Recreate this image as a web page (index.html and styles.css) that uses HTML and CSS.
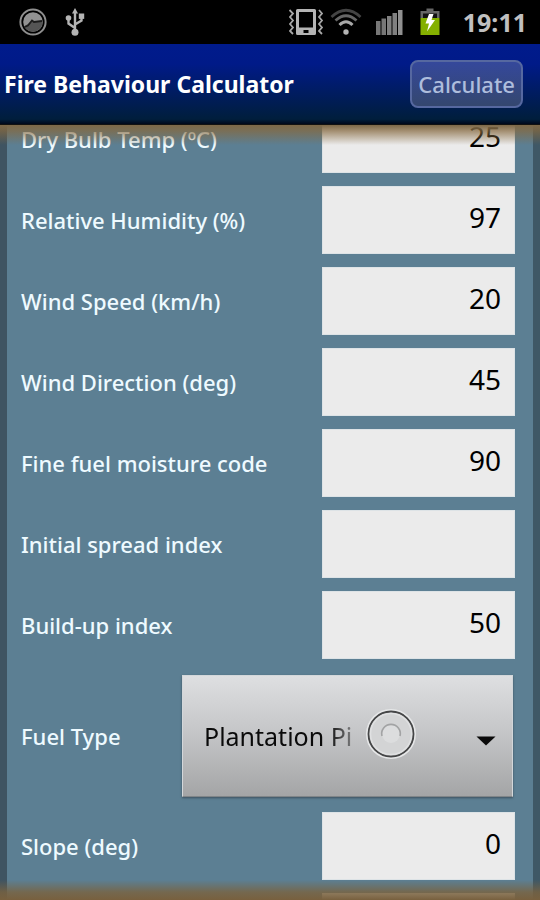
FILE: index.html
```html
<!DOCTYPE html>
<html lang="en">
<head>
<meta charset="UTF-8">
<meta name="viewport" content="width=device-width, initial-scale=1.0">
<title>Fire Behaviour Calculator</title>
<link rel="stylesheet" href="styles.css">
</head>
<body>
<div class="status-bar">
<div class="status-left">
<svg class="icon" width="28" height="28" viewBox="0 0 28 28">
<circle cx="14" cy="14" r="12.6" fill="none" stroke="#8f8f8f" stroke-width="2"/>
<circle cx="14" cy="14" r="9.8" fill="#929292"/>
<path d="M5 18.5 L12 14 L23.500 13 A9.800 9.800 0 0 1 7 21 Z" fill="#555"/>
<path d="M5.500 19 L9 17.500 L13 12.500 L15 14 L23 13" fill="none" stroke="#1c1c1c" stroke-width="1.800"/>
</svg>
<svg class="icon" width="20" height="28" viewBox="0 0 20 28">
<path d="M10 4 V24 M10 20 L3.500 15.500 V10 M10 16.500 L16.500 12.500 V8" fill="none" stroke="#b4b4b4" stroke-width="2.400"/>
<path d="M10 0 L13 5.500 H7 Z" fill="#b4b4b4"/>
<circle cx="10" cy="24.300" r="3.500" fill="#b4b4b4"/>
<circle cx="3.500" cy="10" r="2.800" fill="#b4b4b4"/>
<rect x="13.800" y="5.500" width="5.400" height="5.400" fill="#b4b4b4"/>
</svg>
</div>
<div class="status-right">
<svg class="icon" width="36" height="28" viewBox="0 0 36 28">
<path d="M9.500 1 H26.500 Q28 1 28 2.500 V25.500 Q28 27 26.500 27 H9.500 Q8 27 8 25.500 V2.500 Q8 1 9.500 1 Z M11 4 V19.500 H25 V4 Z M15.500 22 V25 H20.500 V22 Z" fill="#b4b4b4" fill-rule="evenodd"/>
<path d="M1.500 2 L5 5.500 L2 9 L5 12.500 L2 16 L5 19.500 L2 23 L5 26 M31 2 L34 5.500 L31 9 L34 12.500 L31 16 L34 19.500 L31 23 L34 26" fill="none" stroke="#a8a8a8" stroke-width="1.800"/>
</svg>
<svg class="icon wifi" width="32" height="28" viewBox="0 0 32 28">
<path d="M1.500 9 Q16 -4.500 30.500 9" fill="none" stroke="#444" stroke-width="2.800"/>
<path d="M5.500 12.500 Q16 3 26.500 12.500" fill="none" stroke="#666" stroke-width="2.800"/>
<path d="M9.500 17 Q16 10.500 22.500 17" fill="none" stroke="#a8a8a8" stroke-width="3"/>
<circle cx="16" cy="24" r="2.700" fill="#b4b4b4"/>
</svg>
<svg class="icon signal" width="28" height="28" viewBox="0 0 28 28">
<path d="M1 13 H5.500 V27 H1 Z M6.500 10.500 H11 V27 H6.500 Z" fill="#777"/>
<path d="M12 8 H16.500 V27 H12 Z M17.500 5 H22 V27 H17.500 Z" fill="#808080"/>
<path d="M23 2 H27.500 V27 H23 Z" fill="#909090"/>
</svg>
<svg class="icon battery" width="20" height="28" viewBox="0 0 20 28">
<path d="M6.500 0.500 H13.500 V3 H19.500 V10 H0.500 V3 H6.500 Z" fill="#666"/>
<path d="M3 5.500 H17 V10 H3 Z" fill="#111"/>
<path d="M0.500 10 H19.500 V27 H0.500 Z" fill="#84b000"/>
<path d="M9 6 L13.500 6 L11.500 12 L15 12 L7 23.500 L9 15.500 L5.500 15.500 Z" fill="#fff"/>
</svg>
<span class="clock">19:11</span>
</div>
</div>

<header class="title-bar">
<h1>Fire Behaviour Calculator</h1>
<button type="button" class="calculate">Calculate</button>
</header>

<main class="scroller">
<form class="fields">
<div class="row">
<label for="temp">Dry Bulb Temp (ºC)</label>
<input type="text" id="temp" value="25">
</div>
<div class="row">
<label for="humidity">Relative Humidity (%)</label>
<input type="text" id="humidity" value="97">
</div>
<div class="row">
<label for="wind-speed">Wind Speed (km/h)</label>
<input type="text" id="wind-speed" value="20">
</div>
<div class="row">
<label for="wind-dir">Wind Direction (deg)</label>
<input type="text" id="wind-dir" value="45">
</div>
<div class="row">
<label for="ffmc">Fine fuel moisture code</label>
<input type="text" id="ffmc" value="90">
</div>
<div class="row">
<label for="isi">Initial spread index</label>
<input type="text" id="isi" value="">
</div>
<div class="row">
<label for="bui">Build-up index</label>
<input type="text" id="bui" value="50">
</div>
<div class="row">
<label for="fuel">Fuel Type</label>
<div class="spinner">
<select id="fuel">
<option>Plantation Pi</option>
</select>
<svg class="ring" width="50" height="50" viewBox="0 0 50 50">
<circle cx="25" cy="25" r="24" fill="none" stroke="#e6e7e8" stroke-width="2"/>
<circle cx="25" cy="25" r="22.500" fill="#d3d4d5" stroke="#454647" stroke-width="1.800"/>
<circle cx="25" cy="25" r="20.500" fill="none" stroke="#e0e1e2" stroke-width="1.500"/>
<circle cx="25" cy="25" r="9" fill="#dcddde"/>
<path d="M16 27 A9.300 9.300 0 1 1 34 27" fill="none" stroke="#a2a3a4" stroke-width="1.600"/>
</svg>
<svg class="arrow" width="20" height="10" viewBox="0 0 20 10">
<path d="M0.500 0.500 H19.500 L10 9.500 Z" fill="#0a0a0a"/>
</svg>
</div>
</div>
<div class="row">
<label for="slope">Slope (deg)</label>
<input type="text" id="slope" value="0">
</div>
<div class="row">
<input type="text" aria-label="Aspect">
</div>
</form>
</main>
</body>
</html>
```
FILE: styles.css
```css
* {
box-sizing: border-box;
}
body {
margin: 0;
height: 100vh;
display: flex;
flex-direction: column;
overflow: hidden;
background: #000;
font-family: 'Noto Sans', 'Open Sans', sans-serif;
}
.status-bar {
display: flex;
flex: none;
justify-content: space-between;
align-items: center;
height: 44px;
padding: 0 13px 0 19px;
background: #000;
}
.status-left {
display: flex;
gap: 18px;
}
.status-right {
display: flex;
align-items: center;
gap: 12px;
}
.icon {
display: block;
}
.wifi {
margin: 0 1px 0 -6px;
}
.battery {
margin: 0 11px 0 5px;
}
.clock {
color: #c0c0c0;
font-size: 25px;
font-weight: bold;
line-height: 28px;
}
.title-bar {
display: flex;
flex: none;
justify-content: space-between;
align-items: center;
height: 81px;
padding: 0 17px 0 4px;
background: linear-gradient(#001b8c, #001a88 25%, #001e3c 94%, #00081a);
border-bottom: 1px solid #111;
}
.title-bar h1 {
margin: 0;
color: #fff;
font-size: 23px;
line-height: 32px;
}
.calculate {
height: 48px;
padding: 0 6px;
background: linear-gradient(#35489b, #34476f);
border: 2px solid #5668a0;
border-radius: 8px;
color: #aebddd;
font-family: inherit;
font-size: 22px;
font-weight: 500;
}
.scroller {
position: relative;
flex: 1;
min-height: 0;
padding: 0 7px;
overflow: hidden;
background: linear-gradient(90deg, #3f5462 7px, #5c7f93 7px, #5c7f93 calc(100% - 7px), #3f5866 calc(100% - 7px));
}
/* edge glow at both ends of the list */
.scroller::before,
.scroller::after {
content: "";
position: absolute;
left: 0;
right: 0;
height: 20px;
pointer-events: none;
}
.scroller::before {
top: 0;
background: linear-gradient(#7d6848, rgba(133, 104, 62, 0.7) 30%, rgba(133, 104, 62, 0));
}
.scroller::after {
bottom: 0;
background: linear-gradient(rgba(122, 98, 62, 0), rgba(122, 98, 62, 0.8) 60%, #78603e);
}
/* list is scrolled a little past the first row */
.fields {
display: flex;
flex-direction: column;
gap: 13px;
margin-top: -20px;
padding: 0 18px 0 14px;
}
.row {
display: flex;
justify-content: space-between;
align-items: center;
}
.row label {
color: #eefaff;
font-size: 22px;
font-weight: 500;
line-height: 32px;
}
.row input {
width: 193px;
height: 68px;
margin-left: auto;
padding: 0 13px 6px;
background: #ebebeb;
border: 1px solid #dde3e6;
color: #000;
font-family: inherit;
font-size: 28px;
text-align: right;
}
.spinner {
position: relative;
width: 331px;
height: 122px;
margin: 3px 2px 2px 0;
background: linear-gradient(#dedfe1, #c3c4c6 50%, #a4a5a6);
border: 1px solid #d3d7da;
border-bottom-color: #808588;
box-shadow: 0 1px 2px rgba(40, 50, 60, 0.6);
}
.spinner select {
width: 100%;
height: 100%;
padding: 0 150px 0 21px;
appearance: none;
border: none;
background: linear-gradient(90deg, #0a0a0a 145px, rgba(10, 10, 10, 0.2) 176px) text;
color: transparent;
font-family: inherit;
font-size: 25px;
}
.spinner option {
color: #0a0a0a;
}
.ring {
position: absolute;
top: 33px;
right: 96px;
pointer-events: none;
}
.arrow {
position: absolute;
top: 60px;
right: 16px;
pointer-events: none;
}
```
